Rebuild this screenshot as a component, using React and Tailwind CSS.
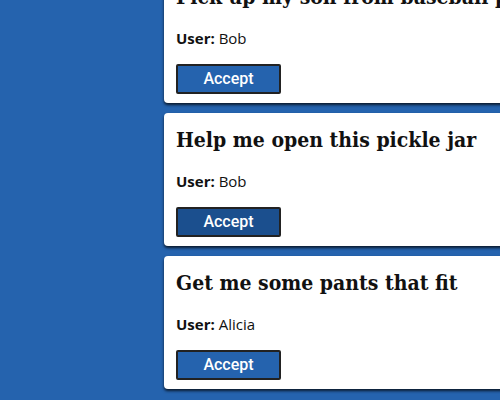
import { useState } from 'react'

const TASKS = [
  { id: 1, title: 'Pick up my son from baseball practice', user: 'Bob' },
  { id: 2, title: 'Help me open this pickle jar', user: 'Bob', hover: true },
  { id: 3, title: 'Get me some pants that fit', user: 'Alicia' },
]

function TaskCard({ task }) {
  return (
    <div className="bg-white rounded-[4px] shadow-[0_2px_3px_rgba(0,0,0,0.75)] pl-3 pt-[13px] pb-[10px] h-[133px] w-[420px] shrink-0">
      <h2 className="text-[21px] leading-[28px] font-bold text-[#111] whitespace-nowrap font-stretch-condensed font-['DejaVu_Serif',serif]">
        {task.title}
      </h2>
      <p className="mt-[17px] text-[15px] leading-[20px] text-[#111] font-['Open_Sans',sans-serif]">
        <span className="font-bold">User:</span> {task.user}
      </p>
      <button
        className={`mt-[16px] w-[105px] h-[30px] border-2 border-[#222] rounded-[2px] text-white text-[16px] font-medium font-['Roboto',sans-serif] ${task.hover ? 'bg-[#1b4f8e]' : 'bg-[#2563ae]'}`}
      >
        Accept
      </button>
    </div>
  )
}

export default function App() {
  const [tasks] = useState(TASKS)
  return (
    <div className="w-[500px] h-[400px] overflow-hidden bg-[#2563ae]">
      <div className="flex flex-col gap-[10px] pl-[164px] -mt-[30px]">
        {tasks.map(t => <TaskCard key={t.id} task={t} />)}
      </div>
    </div>
  )
}
